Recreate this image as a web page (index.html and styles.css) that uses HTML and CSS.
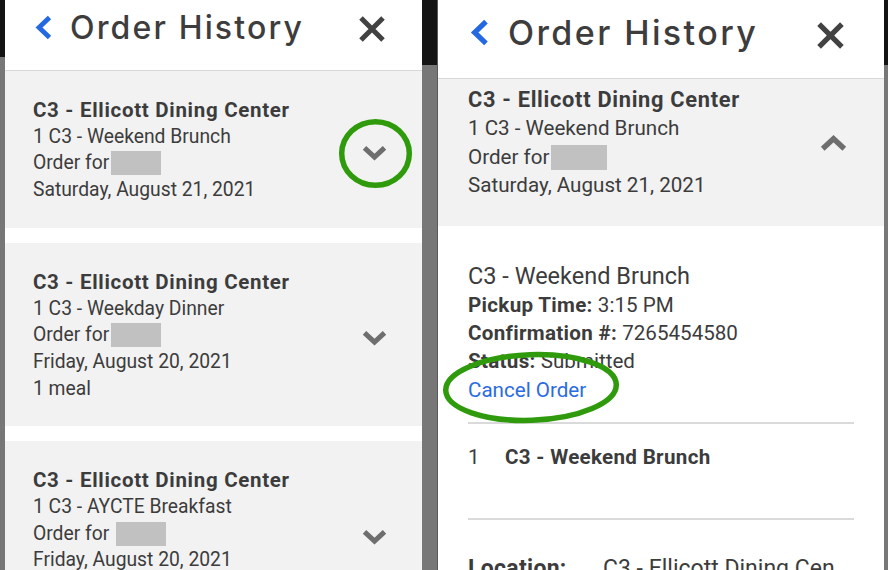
FILE: index.html
```html
<!DOCTYPE html>
<html lang="en">
<head>
<meta charset="utf-8">
<title>Order History</title>
<link rel="stylesheet" href="styles.css">
</head>
<body>
<div class="screen">
  <div class="edge edge--left"></div>

  <section class="phone phone--left">
    <header class="topbar">
      <svg class="back" width="17" height="25" viewBox="0 0 17 25"><polyline points="14.5,2.5 4,12.5 14.5,22.5"/></svg>
      <h1 class="title">Order History</h1>
      <svg class="close" width="28" height="28" viewBox="0 0 28 28"><path d="M3 3L25 25M25 3L3 25"/></svg>
    </header>
    <div class="orders">
      <article class="order">
        <div class="order-info">
          <div class="order-name">C3 - Ellicott Dining Center</div>
          <div>1 C3 - Weekend Brunch</div>
          <div>Order for<span class="redact"></span></div>
          <div>Saturday, August 21, 2021</div>
        </div>
        <svg class="chev" width="25" height="15" viewBox="0 0 25 15"><polyline points="2.5,1.8 12.5,11 22.5,1.8"/></svg>
      </article>
      <article class="order">
        <div class="order-info">
          <div class="order-name">C3 - Ellicott Dining Center</div>
          <div>1 C3 - Weekday Dinner</div>
          <div>Order for<span class="redact"></span></div>
          <div>Friday, August 20, 2021</div>
          <div>1 meal</div>
        </div>
        <svg class="chev" width="25" height="15" viewBox="0 0 25 15"><polyline points="2.5,1.8 12.5,11 22.5,1.8"/></svg>
      </article>
      <article class="order">
        <div class="order-info">
          <div class="order-name">C3 - Ellicott Dining Center</div>
          <div>1 C3 - AYCTE Breakfast</div>
          <div>Order for <span class="redact"></span></div>
          <div>Friday, August 20, 2021</div>
          <div>1 meal</div>
        </div>
        <svg class="chev" width="25" height="15" viewBox="0 0 25 15"><polyline points="2.5,1.8 12.5,11 22.5,1.8"/></svg>
      </article>
    </div>
  </section>

  <div class="edge edge--mid"></div>

  <section class="phone phone--right">
    <header class="topbar">
      <svg class="back" width="19" height="27" viewBox="0 0 17 25"><polyline points="14.5,2.5 4,12.5 14.5,22.5"/></svg>
      <h1 class="title">Order History</h1>
      <svg class="close" width="29" height="29" viewBox="0 0 28 28"><path d="M3 3L25 25M25 3L3 25"/></svg>
    </header>
    <article class="order order--open">
      <div class="order-info">
        <div class="order-name">C3 - Ellicott Dining Center</div>
        <div>1 C3 - Weekend Brunch</div>
        <div>Order for<span class="redact"></span></div>
        <div>Saturday, August 21, 2021</div>
      </div>
      <svg class="chev" width="27" height="17" viewBox="0 0 25 15"><polyline points="2.5,13.2 12.5,4 22.5,13.2"/></svg>
    </article>
    <div class="detail">
      <div class="summary">
        <div class="detail-title">C3 - Weekend Brunch</div>
        <div><b>Pickup Time:</b> 3:15 PM</div>
        <div><b>Confirmation #:</b> 7265454580</div>
        <div><b>Status:</b> Submitted</div>
        <a class="cancel">Cancel Order</a>
      </div>
      <div class="item">
        <span>1</span>
        <b>C3 - Weekend Brunch</b>
      </div>
      <div class="location">
        <b>Location:</b>
        <span>C3 - Ellicott Dining Center</span>
      </div>
    </div>
  </section>

  <div class="edge edge--right"></div>

  <svg class="marks" width="888" height="570" viewBox="0 0 888 570">
    <ellipse cx="375.5" cy="153.5" rx="33.8" ry="31.8"/>
    <ellipse cx="531" cy="387.5" rx="85.3" ry="32.8" transform="rotate(-2 531 387.5)"/>
  </svg>
</div>
</body>
</html>
```

FILE: styles.css
```css
html, body {
  margin: 0;
  background: #121212;
}

body {
  font-family: Roboto, "Liberation Sans", sans-serif;
  color: #3c3c3c;
}

.screen {
  position: relative;
  display: flex;
  width: 888px;
  height: 570px;
  overflow: hidden;
}

.edge {
  flex: none;
  background: linear-gradient(#141414 0 65px, #777 65px);
}

.edge--left {
  width: 5px;
  background: linear-gradient(#141414 0 57px, #777 57px);
}

.edge--mid {
  width: 16px;
  box-shadow: inset -1px 0 #5a5a5a;
}

.edge--right {
  width: 4px;
}

.phone {
  flex: none;
  display: flex;
  flex-direction: column;
  background: #fff;
  overflow: hidden;
}

.phone--left {
  width: 417px;
}

.phone--right {
  width: 446px;
}

/* header */
.topbar {
  flex: none;
  display: flex;
  align-items: center;
  box-sizing: border-box;
  border-bottom: 1px solid #d9d9d9;
}

.phone--left .topbar {
  height: 71px;
  padding: 0 36px 16px 30px;
}

.phone--right .topbar {
  height: 79px;
  padding: 0 39px 13px 32px;
}

.back {
  flex: none;
  fill: none;
  stroke: #2468e2;
  stroke-width: 4.8;
}

.title {
  flex: 1;
  margin: 0 0 0 18px;
  font-family: Inter, "Noto Sans", sans-serif;
  font-weight: 500;
  font-size: 32px;
  letter-spacing: 2.15px;
  color: #3d3d3d;
  white-space: nowrap;
}

.phone--right .title {
  margin-left: 19px;
  font-size: 34px;
  letter-spacing: 2.4px;
}

.close {
  flex: none;
  fill: none;
  stroke: #424242;
  stroke-width: 5;
  margin-top: 4px;
}

.phone--right .close {
  margin-top: 6px;
}

/* order cards */
.orders {
  display: flex;
  flex-direction: column;
  gap: 15px;
}

.order {
  display: flex;
  align-items: center;
  background: #f2f2f2;
  padding: 26px 35px 24px 28px;
}

.order-info {
  flex: 1;
  font-size: 19.3px;
  line-height: 26.7px;
  white-space: nowrap;
}

.order-name {
  font-weight: 700;
  font-size: 20.5px;
  letter-spacing: 0.7px;
}

.redact {
  display: inline-block;
  vertical-align: top;
  width: 50px;
  height: 24px;
  margin: 1px 0 0 2px;
  background: #c1c1c1;
}

.chev {
  flex: none;
  fill: none;
  stroke: #6e6e6e;
  stroke-width: 5;
  margin-top: 6px;
}

.order--open {
  flex: none;
  align-items: flex-start;
  padding: 7px 37px 26px 30px;
}

.order--open .order-info {
  font-size: 20.6px;
  line-height: 28.4px;
}

.order--open .order-name {
  font-size: 21.8px;
  letter-spacing: 0.7px;
}

.order--open .redact {
  width: 56px;
  height: 25px;
  margin-top: 2px;
}

.order--open .chev {
  margin-top: 47.5px;
}

/* details */
.detail {
  padding: 36.5px 30px 0 30px;
  font-size: 20.6px;
  line-height: 28.4px;
}

.detail b {
  font-weight: 700;
  letter-spacing: 0.3px;
}

.detail-title {
  font-size: 23.5px;
}

.summary {
  margin-bottom: 17.5px;
}

.cancel {
  display: block;
  color: #2a6be2;
}

.item {
  display: grid;
  grid-template-columns: 37px auto;
  padding: 19px 0 47px;
  border-top: 2px solid #dadada;
  border-bottom: 2px solid #dadada;
}

.location {
  display: grid;
  grid-template-columns: 135px 235px;
  padding-top: 35px;
  font-size: 23px;
  word-break: break-all;
}

/* annotation marks */
.marks {
  position: absolute;
  top: 0;
  left: 0;
  pointer-events: none;
}

.marks ellipse {
  fill: none;
  stroke: #2f9b0c;
  stroke-width: 5.5;
}
```
